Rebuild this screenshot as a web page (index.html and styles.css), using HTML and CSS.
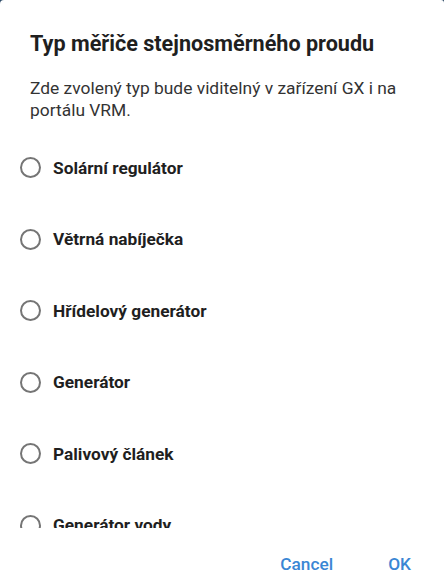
FILE: index.html
```html
<!DOCTYPE html>
<html lang="cs">
<head>
<meta charset="utf-8">
<link rel="stylesheet" href="styles.css">
</head>
<body>
<div class="dialog">
  <h1 class="title">Typ měřiče stejnosměrného proudu</h1>
  <p class="desc">Zde zvolený typ bude viditelný v zařízení GX i na portálu VRM.</p>
  <div class="list">
    <label class="item"><span class="radio"></span><span class="label">Solární regulátor</span></label>
    <label class="item"><span class="radio"></span><span class="label">Větrná nabíječka</span></label>
    <label class="item"><span class="radio"></span><span class="label">Hřídelový generátor</span></label>
    <label class="item"><span class="radio"></span><span class="label">Generátor</span></label>
    <label class="item"><span class="radio"></span><span class="label">Palivový článek</span></label>
    <label class="item"><span class="radio"></span><span class="label">Generátor vody</span></label>
  </div>
  <div class="actions">
    <button class="btn">Cancel</button>
    <button class="btn">OK</button>
  </div>
</div>
</body>
</html>
```
FILE: styles.css
```css
html, body {
  margin: 0;
  padding: 0;
  background: #2d4a66;
}
.dialog {
  width: 444px;
  height: 586px;
  background: #fff;
  border-radius: 4px 3px 0 0;
  font-family: Roboto, "Noto Sans", sans-serif;
  color: #222;
  box-sizing: border-box;
  padding-top: 30px;
  display: flex;
  flex-direction: column;
  overflow: hidden;
}
.title {
  margin: 0 30px;
  font-size: 21.6px;
  line-height: 28px;
  font-weight: 700;
  color: #1f1f1f;
  white-space: nowrap;
}
.desc {
  margin: 19px 30px 0 30px;
  font-size: 17.4px;
  line-height: 22px;
  color: #333;
}
.list {
  margin-top: 11px;
  height: 396px;
  overflow: hidden;
  display: flex;
  flex-direction: column;
  flex-shrink: 0;
}
.item {
  display: flex;
  align-items: center;
  height: 71.5px;
  flex-shrink: 0;
  padding-left: 20px;
  gap: 12px;
}
.radio {
  width: 17px;
  height: 17px;
  border: 2.5px solid #757575;
  border-radius: 50%;
  flex-shrink: 0;
}
.label {
  font-size: 17.3px;
  font-weight: 700;
  color: #1f1f1f;
}
.actions {
  display: flex;
  justify-content: flex-end;
  gap: 23px;
  padding-right: 17px;
  margin-top: 18px;
}
.btn {
  background: none;
  border: none;
  font-family: Roboto, "Noto Sans", sans-serif;
  font-size: 17.3px;
  line-height: 20px;
  font-weight: 500;
  color: #3a86d4;
  padding: 8px 16px;
}
```
